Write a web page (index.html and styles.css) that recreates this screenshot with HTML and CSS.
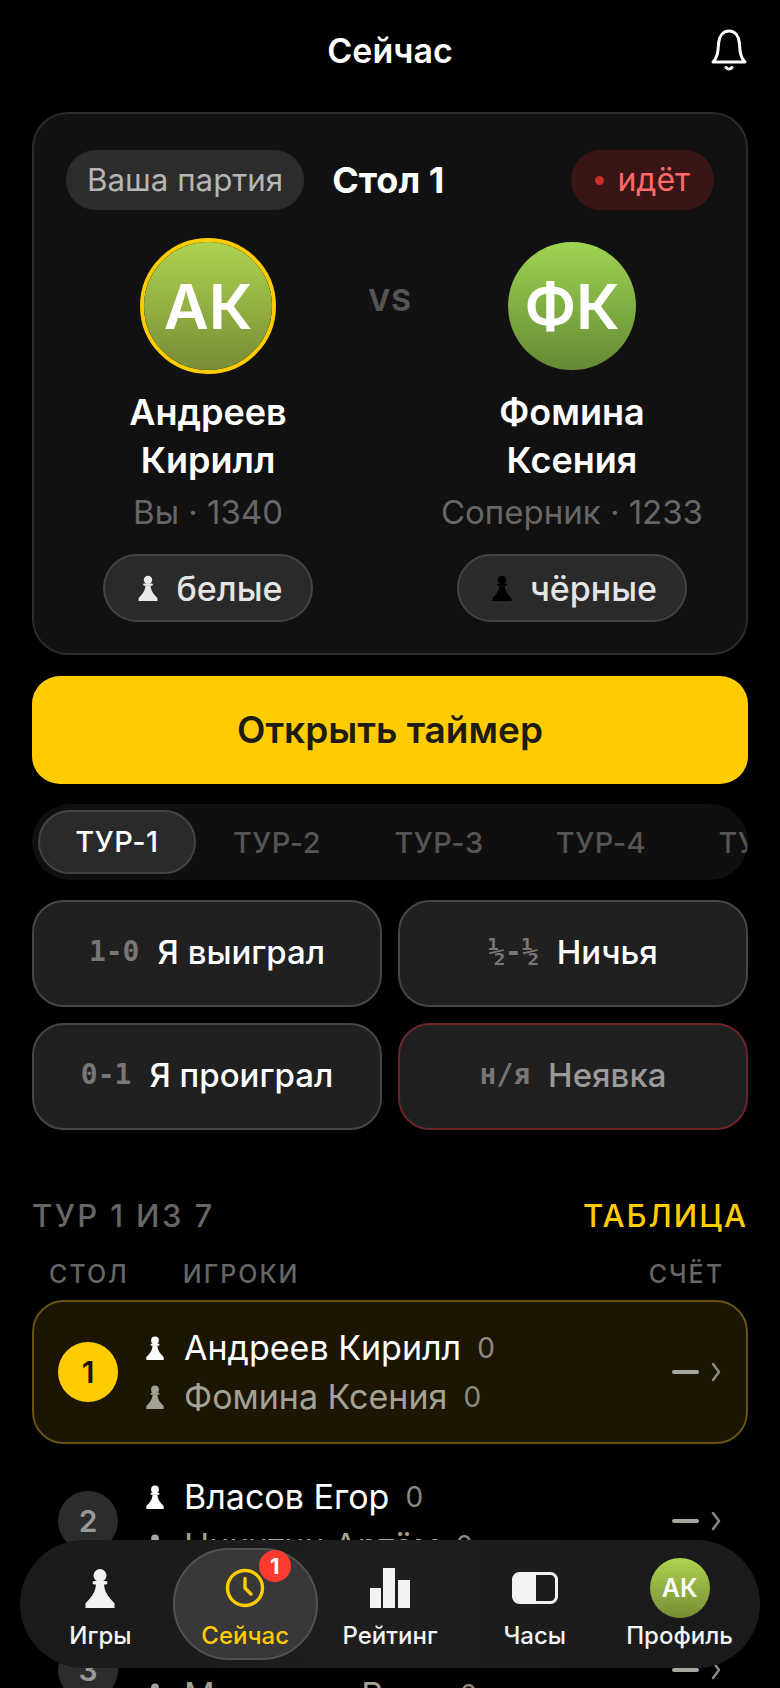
FILE: index.html
```html
<!DOCTYPE html>
<html lang="ru">
<head>
<meta charset="utf-8">
<title>Сейчас</title>
<link rel="stylesheet" href="styles.css">
</head>
<body>
<svg class="defs" width="0" height="0" aria-hidden="true">
  <symbol id="pawn" viewBox="0 0 30 40">
    <circle cx="15" cy="7.500" r="6.500"/>
    <rect x="7.500" y="13" width="15" height="3.400" rx="1.700"/>
    <path d="M11 16h8c.2 6 2.500 10.500 6.500 15 2 2.200 3.500 3.500 4 4.500V40H.5v-4.500c.5-1 2-2.300 4-4.500C8.500 26.500 10.800 22 11 16z"/>
  </symbol>
  <symbol id="chev" viewBox="0 0 10 20">
    <path d="M2 2l6 8-6 8" fill="none" stroke="currentColor" stroke-width="2.500" stroke-linecap="round" stroke-linejoin="round"/>
  </symbol>
</svg>
<div class="screen">
  <header class="top">
    <h1 class="top-title">Сейчас</h1>
    <svg class="bell" viewBox="0 0 38 42" fill="none" stroke="currentColor" stroke-width="3" stroke-linecap="round" stroke-linejoin="round"><path d="M3 33c3-3 4.500-6 5-12l.6-7C9.200 7 13 2 19 2s9.800 5 10.400 12l.6 7c.5 6 2 9 5 12z"/><path d="M16 38.500c1.500 2 4.500 2 6 0"/></svg>
  </header>

  <section class="match">
    <div class="match-head">
      <span class="chip">Ваша партия</span>
      <span class="table-name">Стол 1</span>
      <span class="live"><i class="live-dot"></i>идёт</span>
    </div>
    <div class="versus">
      <div class="player">
        <div class="avatar-ring"><div class="avatar avatar-me">АК</div></div>
        <div class="player-name">Андреев<br>Кирилл</div>
        <div class="player-sub">Вы · 1340</div>
        <div class="side"><svg class="side-pawn pawn-light"><use href="#pawn"/></svg>белые</div>
      </div>
      <div class="vs">VS</div>
      <div class="player">
        <div class="avatar-ring avatar-ring-plain"><div class="avatar avatar-opp">ФК</div></div>
        <div class="player-name">Фомина<br>Ксения</div>
        <div class="player-sub">Соперник · 1233</div>
        <div class="side"><svg class="side-pawn pawn-dark"><use href="#pawn"/></svg>чёрные</div>
      </div>
    </div>
  </section>

  <button class="cta">Открыть таймер</button>

  <nav class="tabs">
    <span class="tab tab-on">ТУР-1</span>
    <span class="tab">ТУР-2</span>
    <span class="tab">ТУР-3</span>
    <span class="tab">ТУР-4</span>
    <span class="tab">ТУР-5</span>
  </nav>

  <div class="results">
    <button class="result"><span class="code">1-0</span>Я выиграл</button>
    <button class="result"><span class="code">½-½</span>Ничья</button>
    <button class="result"><span class="code">0-1</span>Я проиграл</button>
    <button class="result result-absent"><span class="code">н/я</span>Неявка</button>
  </div>

  <div class="section-head">
    <span class="section-title">ТУР 1 ИЗ 7</span>
    <span class="section-link">ТАБЛИЦА</span>
  </div>
  <div class="cols">
    <span class="col-table">СТОЛ</span>
    <span class="col-players">ИГРОКИ</span>
    <span class="col-score">СЧЁТ</span>
  </div>

  <div class="rows">
    <div class="row row-mine">
      <span class="num num-mine">1</span>
      <div class="pair">
        <div class="line"><svg class="row-pawn"><use href="#pawn"/></svg>Андреев Кирилл<b class="pts">0</b></div>
        <div class="line line-dim"><svg class="row-pawn"><use href="#pawn"/></svg>Фомина Ксения<b class="pts">0</b></div>
      </div>
      <span class="dash"></span><svg class="chev"><use href="#chev"/></svg>
    </div>
    <div class="row">
      <span class="num">2</span>
      <div class="pair">
        <div class="line"><svg class="row-pawn"><use href="#pawn"/></svg>Власов Егор<b class="pts">0</b></div>
        <div class="line line-dim"><svg class="row-pawn"><use href="#pawn"/></svg>Никитин Артём<b class="pts">0</b></div>
      </div>
      <span class="dash"></span><svg class="chev"><use href="#chev"/></svg>
    </div>
    <div class="row">
      <span class="num">3</span>
      <div class="pair">
        <div class="line"><svg class="row-pawn"><use href="#pawn"/></svg>Соколов Пётр<b class="pts">0</b></div>
        <div class="line line-dim"><svg class="row-pawn"><use href="#pawn"/></svg>Морозова Вера<b class="pts">0</b></div>
      </div>
      <span class="dash"></span><svg class="chev"><use href="#chev"/></svg>
    </div>
  </div>

  <nav class="dock">
    <div class="dock-item">
      <svg class="dock-icon dock-pawn"><use href="#pawn"/></svg>
      <span class="dock-label">Игры</span>
    </div>
    <div class="dock-item dock-on">
      <svg class="dock-icon" viewBox="0 0 40 40" fill="none" stroke="currentColor" stroke-width="3.400" stroke-linecap="round" stroke-linejoin="round"><circle cx="20" cy="20" r="17.500"/><path d="M20 10.500V20l6 6"/></svg>
      <span class="dock-label">Сейчас</span>
      <span class="badge">1</span>
    </div>
    <div class="dock-item">
      <svg class="dock-icon" viewBox="0 0 40 40" fill="currentColor"><rect x="0" y="20" width="11" height="20"/><rect x="13" y="0" width="12" height="40"/><rect x="28" y="12" width="12" height="28"/></svg>
      <span class="dock-label">Рейтинг</span>
    </div>
    <div class="dock-item">
      <svg class="dock-icon dock-toggle" viewBox="0 0 46 32" fill="none"><rect x="1.500" y="1.500" width="43" height="29" rx="6" stroke="currentColor" stroke-width="3"/><path d="M7 1.500h17v29H7A5.500 5.500 0 0 1 1.500 25V7A5.500 5.500 0 0 1 7 1.500z" fill="currentColor"/></svg>
      <span class="dock-label">Часы</span>
    </div>
    <div class="dock-item">
      <div class="dock-avatar">АК</div>
      <span class="dock-label dock-label-avatar">Профиль</span>
    </div>
  </nav>
</div>
</body>
</html>
```
FILE: styles.css
```css
* { box-sizing: border-box; }
html, body { margin: 0; padding: 0; background: #000; }
body { font-family: Inter, "Noto Sans", sans-serif; color: #fff; }
button { font-family: inherit; cursor: pointer; }
.defs { position: absolute; }

.screen { position: relative; width: 780px; height: 1688px; overflow: hidden; padding: 0 32px; }

.top { height: 112px; display: flex; align-items: center; justify-content: center; position: relative; padding-bottom: 10px; }
.top-title { margin: 0; font-size: 34px; font-weight: 600; line-height: 40px; }
.bell { position: absolute; right: 0; top: 29px; width: 38px; height: 42px; color: #fff; }

.match { height: 543px; background: #111; border: 2px solid #2b2b2b; border-radius: 36px; padding: 36px 32px 0; }
.match-head { display: flex; align-items: center; height: 60px; }
.chip { height: 60px; padding: 0 21px; border-radius: 30px; background: #2c2c2c; color: #b5b5b5; font-size: 31.300px; line-height: 60px; white-space: nowrap; }
.table-name { margin-left: 28px; font-size: 36px; font-weight: 700; }
.live { margin-left: auto; height: 60px; padding: 0 24px; border-radius: 30px; background: #3a1516; color: #ff6b6b; font-size: 32px; line-height: 60px; display: flex; align-items: center; gap: 13px; }
.live-dot { width: 9px; height: 9px; border-radius: 50%; background: #c8302f; }

.versus { display: flex; justify-content: space-between; margin-top: 28px; }
.player { width: 284px; display: flex; flex-direction: column; align-items: center; }
.avatar-ring { width: 136px; height: 136px; border-radius: 50%; border: 4px solid #ffcc00; }
.avatar-ring-plain { border-color: transparent; }
.avatar { width: 128px; height: 128px; border-radius: 50%; display: flex; align-items: center; justify-content: center; font-size: 62px; font-weight: 600; color: #fff; }
.avatar-me { background: linear-gradient(#aed350, #788c35); }
.avatar-opp { background: linear-gradient(#9fd452, #638a35); }
.vs { width: 60px; margin-top: 44px; text-align: center; font-size: 30px; line-height: 36px; font-weight: 700; letter-spacing: 1px; color: #555; }
.player-name { margin-top: 14px; font-size: 36px; line-height: 48px; font-weight: 600; text-align: center; }
.player-sub { margin-top: 6px; font-size: 33px; line-height: 44px; color: #676767; white-space: nowrap; }
.side { margin-top: 20px; height: 68px; padding: 0 28px 0 33px; border-radius: 34px; background: #2a2a2a; border: 2px solid #444; color: #e5e5e5; font-size: 34px; font-weight: 500; display: flex; align-items: center; gap: 18px; }
.side-pawn { width: 20px; height: 26px; }
.pawn-light { fill: #e8e8e8; }
.pawn-dark { fill: #000; }

.cta { display: block; width: 100%; height: 108px; margin-top: 21px; border: 0; border-radius: 28px; background: #ffcc00; color: #1e1b0f; font-size: 37px; font-weight: 600; padding-bottom: 2px; }

.tabs { height: 76px; margin-top: 20px; padding: 6px; background: #0f0f0f; border-radius: 38px; display: flex; align-items: center; overflow: hidden; }
.tab { flex: none; width: 162px; text-align: center; font-size: 29px; font-weight: 500; letter-spacing: 0.500px; color: #555; }
.tab-on { width: 158px; height: 64px; line-height: 60px; border-radius: 32px; background: #2a2a2a; border: 2px solid #444; color: #fff; }

.results { display: grid; grid-template-columns: 1fr 1fr; gap: 16px; margin-top: 20px; }
.result { height: 107px; border-radius: 32px; background: #202020; border: 2px solid #464646; color: #fff; font-size: 33px; font-weight: 500; display: flex; align-items: center; justify-content: center; gap: 18px; padding: 0 0 4px; }
.code { font-family: "DejaVu Sans Mono", monospace; font-size: 28px; font-weight: 700; color: #777; }
.result-absent { border-color: #6a2626; color: #9a9a9a; }

.section-head { display: flex; justify-content: space-between; align-items: center; margin-top: 65px; height: 40px; }
.section-title { font-size: 31px; font-weight: 500; letter-spacing: 2.400px; color: #666; }
.section-link { font-size: 31px; font-weight: 500; letter-spacing: 2px; color: #ffcc00; }

.cols { display: flex; align-items: center; height: 36px; margin-top: 21px; padding: 0 24px 0 17px; font-size: 25px; font-weight: 500; letter-spacing: 2px; color: #666; }
.col-players { margin-left: 54px; }
.col-score { margin-left: auto; }

.rows { display: flex; flex-direction: column; gap: 5px; margin-top: 8px; }
.row { height: 144px; flex: none; display: flex; align-items: center; padding: 0 25px 0 24px; border-radius: 32px; border: 2px solid transparent; }
.row-mine { background: #1c1503; border-color: #665410; }
.num { flex: none; width: 60px; height: 60px; border-radius: 50%; background: #2c2c2c; color: #999; display: flex; align-items: center; justify-content: center; font-size: 30px; font-weight: 600; }
.num-mine { background: #ffcc00; color: #1c1503; }
.pair { margin-left: 28px; flex: 1; display: flex; flex-direction: column; gap: 5px; }
.line { height: 44px; display: flex; align-items: center; font-size: 34px; font-weight: 400; color: #fff; white-space: nowrap; }
.line-dim { color: #a3a295; }
.row-pawn { flex: none; width: 18px; height: 26px; margin-right: 20px; fill: currentColor; }
.pts { margin-left: 16px; font-size: 28px; font-weight: 400; color: #8b8a7f; }
.dash { width: 27px; height: 4px; background: #a8a79b; border-radius: 2px; }
.chev { flex: none; width: 10px; height: 20px; margin-left: 12px; color: #888; }

.dock { position: absolute; left: 20px; top: 1540px; width: 740px; height: 128px; padding: 8px; border-radius: 64px; background: linear-gradient(90deg, #1a1a1a, #1e1e1e 50%, #1a1a1a); display: flex; }
.dock-item { position: relative; flex: 1; min-width: 0; height: 112px; border-radius: 56px; border: 2px solid transparent; display: flex; flex-direction: column; align-items: center; color: #f2f2f2; }
.dock-on { background: #383838; border-color: #525252; color: #ffcc00; }
.dock-icon { width: 40px; height: 40px; margin-top: 18px; }
.dock-pawn { width: 30px; fill: currentColor; }
.dock-toggle { width: 46px; height: 32px; margin-top: 22px; margin-bottom: 4px; }
.dock-label { margin-top: 12px; font-size: 24px; line-height: 32px; font-weight: 500; white-space: nowrap; }
.dock-label-avatar { margin-top: 2px; }
.dock-avatar { width: 60px; height: 60px; margin-top: 8px; border-radius: 50%; background: linear-gradient(#aed350, #788c35); color: #fff; font-size: 25px; font-weight: 600; display: flex; align-items: center; justify-content: center; }
.badge { position: absolute; left: 84px; top: 0; width: 32px; height: 32px; border-radius: 50%; background: #ff3b30; color: #fff; font-size: 22px; font-weight: 700; display: flex; align-items: center; justify-content: center; }
```
